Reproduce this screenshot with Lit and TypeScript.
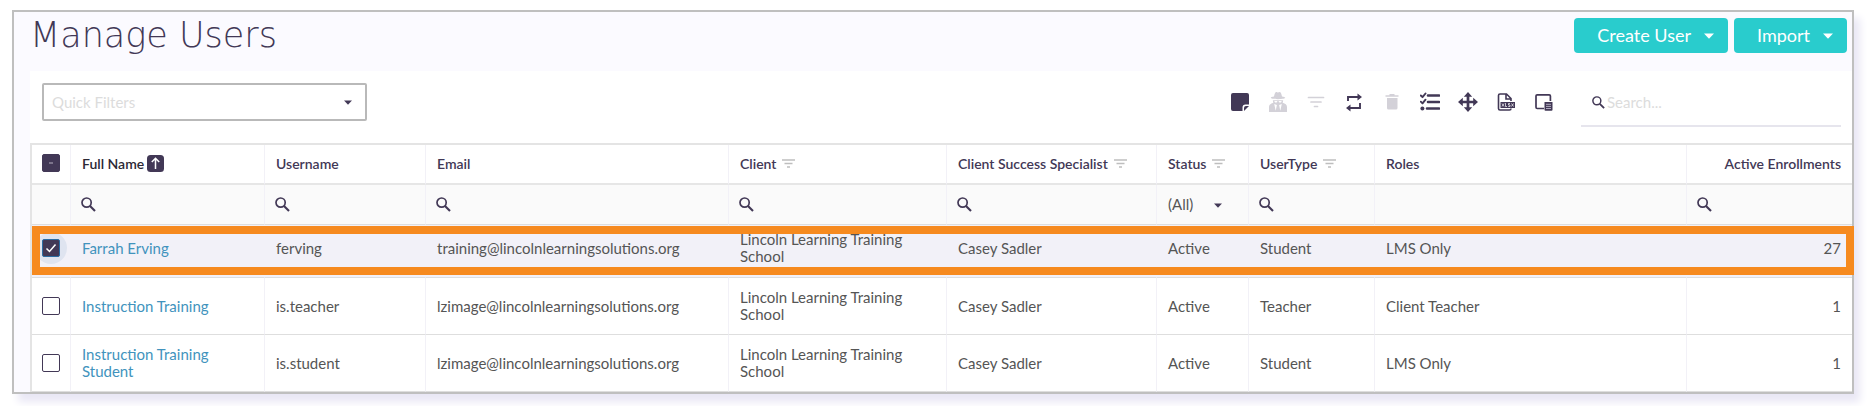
import { LitElement, html, css, svg, nothing } from "lit";
import { customElement, state } from "lit/decorators.js";
import { classMap } from "lit/directives/class-map.js";

interface User {
  id: number;
  name: string;
  username: string;
  email: string;
  client: string;
  specialist: string;
  status: string;
  type: string;
  roles: string;
  enrollments: number;
}

const users: User[] = [
  { id: 1, name: "Farrah Erving", username: "ferving", email: "training@lincolnlearningsolutions.org", client: "Lincoln Learning Training School", specialist: "Casey Sadler", status: "Active", type: "Student", roles: "LMS Only", enrollments: 27 },
  { id: 2, name: "Instruction Training", username: "is.teacher", email: "lzimage@lincolnlearningsolutions.org", client: "Lincoln Learning Training School", specialist: "Casey Sadler", status: "Active", type: "Teacher", roles: "Client Teacher", enrollments: 1 },
  { id: 3, name: "Instruction Training Student", username: "is.student", email: "lzimage@lincolnlearningsolutions.org", client: "Lincoln Learning Training School", specialist: "Casey Sadler", status: "Active", type: "Student", roles: "LMS Only", enrollments: 1 },
];

interface Column {
  key: string;
  label: string;
  menu?: boolean;
  filter: "search" | "select" | "none";
}

const columns: Column[] = [
  { key: "name", label: "Full Name", filter: "search" },
  { key: "username", label: "Username", filter: "search" },
  { key: "email", label: "Email", filter: "search" },
  { key: "client", label: "Client", menu: true, filter: "search" },
  { key: "specialist", label: "Client Success Specialist", menu: true, filter: "search" },
  { key: "status", label: "Status", menu: true, filter: "select" },
  { key: "type", label: "UserType", menu: true, filter: "search" },
  { key: "roles", label: "Roles", filter: "none" },
  { key: "enrollments", label: "Active Enrollments", filter: "search" },
];

const searchIcon = html`<svg class="search-icon" viewBox="0 0 15 15" aria-hidden="true">
  <circle cx="5.6" cy="5.6" r="4.6" fill="none" stroke="currentColor" stroke-width="1.7" />
  <path d="M9 9l5 5" stroke="currentColor" stroke-width="2.1" fill="none" />
</svg>`;

const funnelIcon = html`<svg class="funnel-icon" viewBox="0 0 13 9" aria-hidden="true">
  <path d="M0 1h13M2.5 4.5h8M5 8h3" stroke="currentColor" stroke-width="1.4" fill="none" />
</svg>`;

const caretIcon = html`<svg class="caret" viewBox="0 0 10 6" aria-hidden="true"><path d="M0 .4h10L5 5.8z" fill="currentColor" /></svg>`;

const tools = [
  {
    label: "Notes", muted: false,
    art: svg`<path d="M3 1h14a2 2 0 0 1 2 2v9.500h-3.500a3 3 0 0 0-3 3V19H3a2 2 0 0 1-2-2V3a2 2 0 0 1 2-2z" fill="currentColor"/><path d="M14 19v-3a2 2 0 0 1 2-2h3z" fill="currentColor"/>`,
  },
  {
    label: "Impersonate", muted: true,
    art: svg`<path d="M6 4.500C6.500 2 7.300 0 8.300 0c.8 0 1 .5 1.700.5S11 0 11.700 0c1 0 1.800 2 2.300 4.500 1.800.3 3.200.8 3.200 1.300S14.500 7.200 10 7.200 2.800 6.500 2.800 5.800 4.200 4.800 6 4.500zM4.800 8.200h10.400l-.5 2.600c2.600.7 4.300 2 4.300 4.200V20H1v-5c0-2.200 1.700-3.500 4.300-4.200z" fill="currentColor"/><path d="M6.300 8.900h3.200l-.8 1.600H7zM10.500 8.900h3.200l-.7 1.600h-1.700zM6.200 12l2.700 1-1.200 5.800zM13.800 12l-2.700 1 1.200 5.800z" fill="#fff"/>`,
  },
  {
    label: "Filter", muted: true,
    art: svg`<path d="M2.500 5.500h15M5 10h10M8.500 14.500h3" stroke="currentColor" stroke-width="1.700" stroke-linecap="round" fill="none"/>`,
  },
  {
    label: "Refresh", muted: false,
    art: svg`<path d="M4 9V5h11M16 11v5H5" stroke="currentColor" stroke-width="1.900" fill="none"/><path d="M13.500 1.500L18 5l-4.500 3.500zM6.500 12.500L2 16l4.500 3.500z" fill="currentColor"/>`,
  },
  {
    label: "Delete", muted: true,
    art: svg`<path d="M7.500 2h5v1.200h4v1.500h-13V3.200h4zM5 6h10.500v10a1.500 1.500 0 0 1-1.500 1.500H6.500A1.500 1.500 0 0 1 5 16z" fill="currentColor"/>`,
  },
  {
    label: "Select columns", muted: false,
    art: svg`<path d="M8 3.500h11M8 10h11M7 16.500h12" stroke="currentColor" stroke-width="2.600" stroke-linecap="round" fill="none"/><path d="M.8 3.500l1.700 1.700L5.500 1.500M.8 9.700l1.700 1.700L5.500 7.700" stroke="currentColor" stroke-width="1.900" stroke-linecap="round" stroke-linejoin="round" fill="none"/><circle cx="2.400" cy="16.500" r="2" fill="currentColor"/>`,
  },
  {
    label: "Move", muted: false,
    art: svg`<path d="M10 2.500v15M2.500 10h15" stroke="currentColor" stroke-width="2.700" fill="none"/><path d="M10 0l4.200 4.800H5.800zM10 20l4.200-4.800H5.800zM0 10l4.800-4.200v8.400zM20 10l-4.800-4.200v8.400z" fill="currentColor"/>`,
  },
  {
    label: "Export to XLSX", muted: false,
    art: svg`<path d="M15 9V6.500L10.500 2H4a1.500 1.500 0 0 0-1.500 1.500v13A1.500 1.500 0 0 0 4 18h9.500a1.500 1.500 0 0 0 1.500-1.500M10 2.500V7h4.500" stroke="currentColor" stroke-width="1.600" fill="none"/><path d="M4.500 10H19v6H4.500z" fill="currentColor"/><path d="M6 11.500l2 3M8 11.500l-2 3M9.500 11v3.500h1.500M14 11.500h-1.500V13H14v1.500h-1.800M15.500 11.500l2 3M17.500 11.500l-2 3" stroke="#fff" stroke-width=".7" fill="none"/>`,
  },
  {
    label: "Column chooser", muted: false,
    art: svg`<path d="M10 16.500H3.200A1.200 1.200 0 0 1 2 15.300V4a1.200 1.200 0 0 1 1.200-1.200h12A1.200 1.200 0 0 1 16.400 4v5" stroke="currentColor" stroke-width="1.700" fill="none"/><path d="M10.500 10h8v7.800a1 1 0 0 1-1 1h-6a1 1 0 0 1-1-1z" fill="currentColor"/><path d="M12 12.300h5M12 14.400h5M12 16.500h5" stroke="#bdb9c9" stroke-width=".9" fill="none"/>`,
  },
];

@customElement("app-root")
export class AppRoot extends LitElement {
  @state() private selected = new Set<number>([1]);

  static styles = css`
    :host {
      display: block;
      --ink: #423856;
      --text: #555;
      --line: #dedede;
      font: 15px/17px Lato, sans-serif;
      color: var(--text);
    }
    * { box-sizing: border-box; }
    input, select, button { font: inherit; color: inherit; margin: 0; }
    .frame {
      margin: 10px 13px 12px 12px;
      border: 2px solid #bfbfbf;
      background: #fbfaff;
      box-shadow: 6px 8px 8px #e9e7f5;
      padding-left: 16px;
    }
    .title-bar {
      display: flex;
      justify-content: space-between;
      align-items: flex-start;
      padding: 6px 5px 18px 0;
    }
    h1 {
      margin: 0;
      font: 300 35px/35px "DejaVu Sans", sans-serif;
      color: var(--ink);
    }
    .actions { display: flex; gap: 6px; }
    .action {
      display: flex;
      align-items: center;
      gap: 13px;
      height: 35px;
      padding: 0 14px 0 23px;
      border: 0;
      border-radius: 4px;
      background: #29cccd;
      color: #fff;
      font-size: 18px;
    }
    .caret { width: 10px; height: 6px; flex: none; }
    .panel { background: #fff; }
    .toolbar {
      display: flex;
      align-items: center;
      justify-content: space-between;
      height: 72px;
      padding: 0 11px 10px 12px;
    }
    .picker { position: relative; color: var(--ink); }
    .picker .caret {
      position: absolute;
      right: 15px;
      top: 50%;
      width: 8px;
      height: 5px;
      margin-top: -2px;
      pointer-events: none;
    }
    .picker select {
      appearance: none;
      width: 100%;
      background: none;
      border: 0;
      border-radius: 0;
    }
    .quick { width: 325px; }
    .picker.quick select {
      height: 38px;
      border: 2px solid #b9b9b9;
      border-radius: 2px;
      padding: 0 8px;
      color: #dcdcdc;
    }
    .tool-side { display: flex; align-items: center; gap: 18px; }
    .tools { display: flex; }
    .tool {
      display: grid;
      place-items: center;
      width: 38px;
      height: 38px;
      padding: 0;
      border: 0;
      background: none;
      color: var(--ink);
    }
    .tool.muted { color: #d3d1d8; }
    .tool svg { width: 20px; height: 20px; }
    .search {
      display: flex;
      align-items: center;
      gap: 2px;
      width: 260px;
      height: 47px;
      padding: 0 11px;
      border-bottom: 2px solid #e6e5ed;
      color: var(--ink);
      align-self: flex-end;
      margin-bottom: -2px;
    }
    .search-icon { width: 15px; height: 15px; flex: none; display: block; }
    .search .search-icon { width: 13px; height: 13px; }
    .search input, .filter input {
      flex: 1;
      min-width: 0;
      border: 0;
      padding: 0;
      background: none;
      outline: none;
    }
    .search input::placeholder { color: #dcdcdc; opacity: 1; }
    table {
      width: 100%;
      table-layout: fixed;
      border-spacing: 0;
      border: solid #e4e4e4;
      border-width: 2px 0 0 2px;
    }
    .c-check { width: 39px; }
    .c-name { width: 194px; }
    .c-username { width: 161px; }
    .c-email { width: 303px; }
    .c-client { width: 218px; }
    .c-specialist { width: 210px; }
    .c-status { width: 92px; }
    .c-type { width: 126px; }
    .c-enrollments { width: 165px; }
    th, td {
      padding: 0 11px;
      border-right: 1px solid #f2f1f7;
      border-bottom: 1px solid var(--line);
      text-align: left;
      vertical-align: middle;
    }
    th:last-child, td:last-child { border-right: 0; }
    th.num, td.num { text-align: right; }
    th {
      height: 40px;
      padding-bottom: 2px;
      border-bottom: 2px solid #e6e6e6;
      font-size: 14px;
      font-weight: 600;
      color: var(--ink);
      white-space: nowrap;
    }
    .head { display: inline-flex; align-items: center; gap: 6px; }
    .head.sorted { gap: 3px; color: #2b2835; }
    .funnel-icon { width: 13px; height: 9px; color: #bebebe; }
    .sort { width: 17px; height: 17px; display: block; }
    .filters td { height: 40px; background: #fafafa; }
    .filter { display: flex; align-items: center; margin-left: -1px; color: var(--ink); }
    .filter-select select { color: var(--text); padding: 0; height: 24px; }
    .row td { height: 57px; }
    .row.marked { position: relative; }
    .row.marked td { height: 53px; padding-bottom: 6px; background: #f2f1f8; border-right-color: #f2f1f8; }
    .row.marked td:first-child::after {
      content: "";
      position: absolute;
      inset: 1px -2px 3px 0;
      border: 8px solid #f68a1f;
      pointer-events: none;
    }
    a { color: #4193bd; text-decoration: none; }
    .check-cell { padding-left: 10px; padding-right: 0; }
    .halo { width: 18px; }
    .marked .halo {
      width: 32px;
      height: 32px;
      margin-left: -7px;
      padding: 7px;
      border-radius: 50%;
      background: #dfe4f0;
    }
    .box {
      appearance: none;
      display: block;
      width: 18px;
      height: 18px;
      border: 1px solid var(--ink);
      border-radius: 2px;
      background: #fff center / 12px no-repeat;
    }
    .box:checked {
      border-color: #2b6ca3;
      background-color: var(--ink);
      background-image: url("data:image/svg+xml,%3Csvg xmlns='http://www.w3.org/2000/svg' viewBox='0 0 12 12'%3E%3Cpath d='M1.500 6.500l3 3 6-7' fill='none' stroke='white' stroke-width='1.500'/%3E%3C/svg%3E");
    }
    .box:indeterminate {
      background-color: var(--ink);
      background-image: url("data:image/svg+xml,%3Csvg xmlns='http://www.w3.org/2000/svg' viewBox='0 0 12 12'%3E%3Cpath d='M4 6h4' stroke='%23b5b0c0' stroke-width='1.200'/%3E%3C/svg%3E");
    }
  `;

  private toggle(id: number) {
    const next = new Set(this.selected);
    next.has(id) ? next.delete(id) : next.add(id);
    this.selected = next;
  }

  private toggleAll() {
    this.selected = this.selected.size === users.length ? new Set() : new Set(users.map((u) => u.id));
  }

  private renderFilter(c: Column) {
    if (c.filter === "none") return nothing;
    if (c.filter === "select") {
      return html`<div class="picker filter-select">
        <select aria-label="Filter ${c.label}"><option>(All)</option><option>Active</option><option>Inactive</option></select>
        ${caretIcon}
      </div>`;
    }
    return html`<label class="filter">${searchIcon}<input type="text" aria-label="Filter ${c.label}" /></label>`;
  }

  private renderRow(u: User, marked: boolean) {
    return html`<tr class=${classMap({ row: true, marked })}>
      <td class="check-cell">
        <div class="halo">
          <input class="box" type="checkbox" aria-label="Select ${u.name}" .checked=${this.selected.has(u.id)} @change=${() => this.toggle(u.id)} />
        </div>
      </td>
      <td><a href="#user-${u.id}">${u.name}</a></td>
      <td>${u.username}</td>
      <td>${u.email}</td>
      <td>${u.client}</td>
      <td>${u.specialist}</td>
      <td>${u.status}</td>
      <td>${u.type}</td>
      <td>${u.roles}</td>
      <td class="num">${u.enrollments}</td>
    </tr>`;
  }

  render() {
    const count = this.selected.size;
    return html`<main class="frame">
      <header class="title-bar">
        <h1>Manage Users</h1>
        <div class="actions">
          <button class="action" type="button">Create User ${caretIcon}</button>
          <button class="action" type="button">Import ${caretIcon}</button>
        </div>
      </header>
      <section class="panel">
        <div class="toolbar">
          <div class="picker quick">
            <select aria-label="Quick Filters"><option>Quick Filters</option></select>
            ${caretIcon}
          </div>
          <div class="tool-side">
            <div class="tools">
              ${tools.map((t) => html`<button type="button" class=${classMap({ tool: true, muted: t.muted })} aria-label=${t.label}>
                <svg viewBox="0 0 20 20" aria-hidden="true">${t.art}</svg>
              </button>`)}
            </div>
            <label class="search">${searchIcon}<input type="text" placeholder="Search..." aria-label="Search" /></label>
          </div>
        </div>
        <table>
          <colgroup>
            <col class="c-check" />
            ${columns.map((c) => html`<col class="c-${c.key}" />`)}
          </colgroup>
          <thead>
            <tr>
              <th class="check-cell">
                <input class="box" type="checkbox" aria-label="Select all" .checked=${count === users.length}
                  .indeterminate=${count > 0 && count < users.length} @change=${this.toggleAll} />
              </th>
              ${columns.map((c) => html`<th class=${classMap({ num: c.key === "enrollments" })}>
                <span class=${classMap({ head: true, sorted: c.key === "name" })}>${c.label}${c.key === "name"
                  ? html`<svg class="sort" viewBox="0 0 17 17" aria-hidden="true">
                      <rect width="17" height="17" rx="3.500" fill="#423856" />
                      <path d="M8.500 14V3.500M4.800 7l3.700-3.700L12.200 7" fill="none" stroke="#fff" stroke-width="1.500" />
                    </svg>`
                  : nothing}${c.menu ? funnelIcon : nothing}</span>
              </th>`)}
            </tr>
            <tr class="filters">
              <td></td>
              ${columns.map((c) => html`<td>${this.renderFilter(c)}</td>`)}
            </tr>
          </thead>
          <tbody>
            ${users.map((u, i) => this.renderRow(u, i === 0))}
          </tbody>
        </table>
      </section>
    </main>`;
  }
}
